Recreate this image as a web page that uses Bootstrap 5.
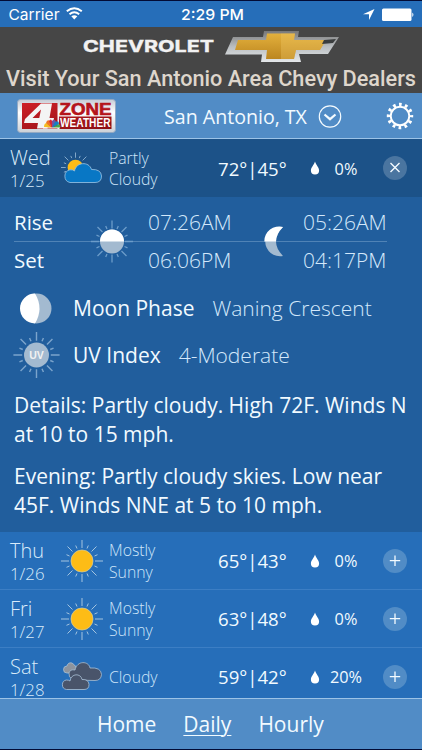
<!DOCTYPE html>
<html lang="en">
<head>
<meta charset="utf-8">
<meta name="viewport" content="width=device-width, initial-scale=1">
<title>4 Zone Weather</title>
<link href="https://cdn.jsdelivr.net/npm/bootstrap@5.3.0/dist/css/bootstrap.min.css" rel="stylesheet">
<style>
body{font-family:"Open Sans","Noto Sans",sans-serif;background:#266eb9;color:#f1faff;width:422px;height:750px;overflow:hidden;border-top:1px solid #020b35;border-bottom:1px solid #020b35;white-space:nowrap}
svg{display:block;flex:none}
.status{height:26px;background:#266eb9;font-family:Inter,"Liberation Sans",sans-serif;font-size:14.5px;padding:3px 8px 0}
.ad{height:66px;background:#464646}
.top{height:46px;background:#518cc6;border-bottom:1px solid #9cc3e7;padding-left:17px}
.city{font-size:19.6px;width:146px;margin-left:48px;padding-top:2px}
.day{height:58px;border-bottom:1px solid #3c7ec4;padding-left:10px;color:#f1faff}
.day.open{background:#1c5288;border:0}
.date{width:51px;font-weight:300;color:#d9ebfa;line-height:23px;padding-top:3px}
.date b{display:block;font-weight:300;font-size:20px;line-height:22px}
.date span{display:block;font-size:16.8px}
.sky{width:115px;padding-left:6px;font-weight:300;font-size:15.8px;line-height:21.5px;color:#cfe6fa;padding-top:2px}
.temp{width:92px;font-size:18.6px;padding-top:1px}
.rain{width:44px;font-size:16.3px;text-align:center;margin-left:4px;padding-top:2px}
.toggle{width:24px;height:24px;background:#518cc6;margin-left:15px}
.open .toggle{background:#4a75a0}
.detail{height:335px;background:#215e9d;font-size:21px;padding:0 14px}
.suns{height:86px;position:relative;padding-top:10px}
.suns>div{height:38px}
.suns .line{position:absolute;left:0;right:21px;top:44px;height:1px;background:#5083b6}
.suns svg{position:absolute;left:0;top:0}
.c1{width:134px;font-size:20.5px}.c2{width:155px}
.thin{font-weight:300;color:#d3e8fb}
.suns .thin{font-size:21px}
.fact{height:46px}
.fact svg{margin-left:-1px;margin-right:12px}
.fact span{padding-top:1px}
.fact .thin{margin-left:18px}
.moon{height:43px;margin-top:4px}
.uv{margin-top:2px}
.words{padding-top:13px}
.words p{line-height:28.5px;margin:0 0 14px}
.days{height:166px;overflow:hidden}
.foot{height:51px;background:#518cc6;border-top:1px solid #9cc3e7;font-size:21px;padding:1px 0 0 97px;gap:27px}
.foot a{color:#f1faff;text-decoration:none}
.foot a.on{text-decoration:underline;text-decoration-thickness:1px;text-underline-offset:3px}
</style>
<script src="https://cdn.jsdelivr.net/npm/bootstrap@5.3.0/dist/js/bootstrap.bundle.min.js"></script>
</head>
<body class="d-flex flex-column">
<svg width="0" height="0" class="position-absolute">
<defs>
<g id="rays" fill="none" stroke-linecap="butt"><path d="M0-13V-21M0 13V21M-13 0H-21M13 0H21M9.5-9.5L14.5-14.5M-9.5-9.5L-14.5-14.5M9.5 9.5L14.5 14.5M-9.5 9.5L-14.5 14.5M5-12.5L6.3-15.5M-5-12.5L-6.3-15.5M5 12.5L6.3 15.5M-5 12.5L-6.3 15.5M12.5-5L15.5-6.3M-12.5-5L-15.5-6.3M12.5 5L15.5 6.3M-12.5 5L-15.5 6.3"/></g>
<symbol id="sunny" viewBox="-21 -21 42 42"><use href="#rays" stroke="#a4c4df"/><circle r="11" fill="#fdbc16" stroke="#d9cf9b" stroke-width=".7"/></symbol>
<symbol id="drop" viewBox="0 0 10 14"><path d="M5 .5C6 4 9.100 6.500 9.100 9.500A4.100 4 0 0 1 .9 9.500C.9 6.500 4 4 5 .5Z" fill="#fff"/></symbol>
<symbol id="plus" viewBox="0 0 24 24"><path d="M12 6.500V17M6.800 11.700H17.200" stroke="#f4fbff" stroke-width="1.300"/></symbol>
<linearGradient id="gold" x2="0" y2="1"><stop stop-color="#e3b03c"/><stop offset="1" stop-color="#bc8620"/></linearGradient>
<linearGradient id="steel" x2="0" y2="1"><stop stop-color="#777"/><stop offset=".5" stop-color="#b9bdc0"/><stop offset="1" stop-color="#e4e7e9"/></linearGradient>
<linearGradient id="red" x2="1" y2="1"><stop stop-color="#ce2028"/><stop offset="1" stop-color="#8c0f13"/></linearGradient>
<linearGradient id="plate" x2="0" y2="1"><stop stop-color="#c5ccd6"/><stop offset=".4" stop-color="#fff"/><stop offset="1" stop-color="#cbd0d6"/></linearGradient>
</defs></svg>

<header class="status d-flex">
<svg width="406" height="20" viewBox="8 4 406 20"><g fill="#fff">
<text x="8.500" y="20" font-size="15" textLength="51" lengthAdjust="spacingAndGlyphs">Carrier</text>
<text x="181" y="20" font-size="15" font-weight="500" textLength="63" lengthAdjust="spacingAndGlyphs">2:29 PM</text>
<path d="M74.300 19.500L71.300 16.300Q74.300 14 77.300 16.300Z"/><path d="M69.500 14.300Q74.300 10.300 79.200 14.300M66.800 11.300Q74.300 5.300 81.800 11.300" fill="none" stroke="#fff" stroke-width="2"/>
<path d="M374.500 9L363 14.300H369V20Z"/><rect x="382" y="8.500" width="29.500" height="12.500" rx="1.500"/><path d="M412.300 12.500Q414.500 14.700 412.300 17Z"/></g></svg>
</header>

<section class="ad">
<svg width="422" height="66" viewBox="0 27 422 66">
<text x="83" y="51.700" font-size="16.500" font-weight="700" font-family="Inter,sans-serif" fill="#f2f2f2" stroke="#f2f2f2" stroke-width=".4" textLength="131" lengthAdjust="spacingAndGlyphs">CHEVROLET</text>
<path d="M233 37H263L264 31H299L298 37H339L328 54H299L301 62H261L262 54.500H225Z" fill="url(#steel)"/>
<path d="M238 40H266L267 33.500H295L294 40H326L320 50H296L294 59H266L267 50H235Z" fill="url(#gold)"/><path d="M281 33.500H295L294 40H326L320 50H296L294 59H281Z" fill="#f1c867" opacity=".35"/>
<path d="M324 40L336 39L333 43L322 44Z" fill="#3a3d3e"/>
<text x="6" y="85.500" font-size="22" font-weight="500" font-family="Roboto,sans-serif" fill="#ded6cc" textLength="410" lengthAdjust="spacingAndGlyphs">Visit Your San Antonio Area Chevy Dealers</text>
</svg>
</section>

<nav class="top d-flex align-items-center flex-shrink-0">
<svg width="99" height="34" viewBox="0 0 99 34"><rect x=".5" y=".5" width="98" height="33" rx="3" fill="url(#plate)" stroke="#93a9c3"/>
<path d="M5 4H40.500V30H5ZM42 17.500H94.500V30H42Z" fill="url(#red)"/>
<path d="M24 4.500H35L32.500 19H37L36 24H31.500L30.500 29.500H20L21 24H7L8 20ZM24 10.500L15.500 19H22.300Z" fill="#f4f4f4" fill-rule="evenodd"/>
<g font-family="Liberation Sans" font-weight="700"><text x="42.500" y="15.800" font-size="16" fill="#b5141b" stroke="#b5141b" stroke-width=".6" textLength="52" lengthAdjust="spacingAndGlyphs">ZONE</text><text x="43" y="28.300" font-size="12.500" fill="#fff" textLength="50.500" lengthAdjust="spacingAndGlyphs">WEATHER</text></g>
<path d="M35 29L27 28Q27 24 30 24Z" fill="#f5bd21"/><path d="M35 29L29 24Q30 20 33 22Z" fill="#ef7425"/><path d="M35 29L32 22Q34 19 35 22Z" fill="#d9273a"/><path d="M35 29L35 22Q38 19 39 23Z" fill="#7254a0"/><path d="M35 29L38 23Q42 21 42 25Z" fill="#167fc4"/><path d="M35 29L42 25Q45 28 42 29Z" fill="#4ba94a"/><path d="M26 29H43" stroke="#fff"/></svg>
<div class="city">San Antonio, TX</div>
<svg width="24" height="24" viewBox="0 0 24 24" class="ms-2" fill="none" stroke="#f4fbff"><circle cx="12" cy="12.500" r="10.700" stroke-width="1.200"/><path d="M6.500 10.500L12 15.200L17.500 10.500" stroke-width="2.200"/></svg>
<svg width="28" height="28" viewBox="-14 -14 28 28" class="ms-auto me-2" fill="none" stroke="#fff"><circle r="9.300" stroke-width="2"/><circle r="11.500" stroke-width="3.400" stroke-dasharray="2.700 3.321" stroke-dashoffset="1.350"/></svg>
</nav>

<section class="day open d-flex align-items-center flex-shrink-0">
<div class="date"><b>Wed</b><span>1/25</span></div>
<svg width="42" height="42" viewBox="-21 -21 42 42"><g transform="translate(-6.500 -.5) scale(.75)"><path d="M0-13V-20M-13 0H-20M9.500-9.500L14.500-14.500M-9.500-9.500L-14.500-14.500M5-12.500L6.300-15.500M-5-12.500L-6.300-15.500M-12.500-5L-15.500-6.300M-12.500 5L-15.500 6.300" stroke="#a4c4df" fill="none"/><circle r="10.500" fill="#fdbc16"/></g><path d="M-12 14.500A6.500 6.500 0 0 1-12 1.800Q-9 1.500-7.500 3C-6-6 7-7 9.500 1.500Q19 1 19.500 8Q19.500 14.500 13 14.500Z" fill="#0877c5" stroke="#8dbbe0" stroke-width=".9"/></svg>
<div class="sky">Partly<br>Cloudy</div><div class="temp">72°|45°</div><svg width="10" height="14"><use href="#drop"/></svg><div class="rain">0%</div>
<div class="toggle rounded-circle"><svg width="24" height="24" stroke="#f4fbff" stroke-width="1.400"><path d="M7.500 7L16.500 16M16.500 7L7.500 16"/></svg></div>
</section>

<section class="detail flex-shrink-0">
<div class="suns">
<div class="d-flex"><span class="c1">Rise</span><span class="c2 thin">07:26AM</span><span class="thin">05:26AM</span></div>
<div class="d-flex"><span class="c1">Set</span><span class="c2 thin">06:06PM</span><span class="thin">04:17PM</span></div>
<i class="line"></i>
<svg width="394" height="86" viewBox="14 197 394 86"><g transform="translate(112 241.500)"><use href="#rays" stroke="#6c9cc9" stroke-width="1.300"/><circle r="12" fill="#a3bad0"/><path d="M-12 0A12 12 0 0 1 12 0Z" fill="#fff"/></g>
<path d="M283 227A14.800 14.800 0 1 0 283 256Q269 241.500 283 227Z" fill="#a3bad0"/><path d="M283 227A14.800 14.800 0 0 0 264.300 241.500H276Q276 234 283 227Z" fill="#fff"/></svg>
</div>
<div class="fact moon d-flex align-items-center"><svg width="48" height="46" viewBox="-23 -23 48 46"><circle r="15" cx=".5" cy="-.5" fill="#a3bad0"/><path d="M-1-15.500A15 15 0 0 0-1 14.500Q8-.5-1-15.500Z" fill="#fff"/></svg><span>Moon Phase</span><span class="thin">Waning Crescent</span></div>
<div class="fact uv d-flex align-items-center"><svg width="48" height="46" viewBox="-23 -23 48 46"><use href="#rays" stroke="#7ba4cc" stroke-width="1.300" transform="translate(.5 0) scale(1.100)"/><circle r="12.500" cx=".5" fill="#a3bad0"/><text x=".5" y="3.500" text-anchor="middle" font-family="Liberation Sans" font-size="10.500" font-weight="700" fill="#f2f2f2">UV</text></svg><span>UV Index</span><span class="thin">4-Moderate</span></div>
<div class="words"><p>Details: Partly cloudy. High 72F. Winds N<br>at 10 to 15 mph.</p><p>Evening: Partly cloudy skies. Low near<br>45F. Winds NNE at 5 to 10 mph.</p></div>
</section>

<main class="days flex-shrink-0">
<section class="day d-flex align-items-center"><div class="date"><b>Thu</b><span>1/26</span></div><svg width="42" height="42"><use href="#sunny"/></svg><div class="sky">Mostly<br>Sunny</div><div class="temp">65°|43°</div><svg width="10" height="14"><use href="#drop"/></svg><div class="rain">0%</div><div class="toggle rounded-circle"><svg width="24" height="24"><use href="#plus"/></svg></div></section>
<section class="day d-flex align-items-center"><div class="date"><b>Fri</b><span>1/27</span></div><svg width="42" height="42"><use href="#sunny"/></svg><div class="sky">Mostly<br>Sunny</div><div class="temp">63°|48°</div><svg width="10" height="14"><use href="#drop"/></svg><div class="rain">0%</div><div class="toggle rounded-circle"><svg width="24" height="24"><use href="#plus"/></svg></div></section>
<section class="day d-flex align-items-center"><div class="date"><b>Sat</b><span>1/28</span></div><svg width="42" height="42" viewBox="0 0 42 42"><g stroke="#a9c0d6" stroke-width=".8"><path d="M6 17A3.500 3.500 0 0 1 6 10Q7 6 11 7Q14 9 15 11V17Z" fill="#8e949d"/><path d="M12 24Q7 21 8 17Q9 13 14 14C16 4 28 5 29 12Q40 11 40.500 18.500Q40 24.500 34 24.500Z" fill="#49546a"/><path d="M5.500 33.500A4.800 4.800 0 0 1 5.500 24Q8 24 9 25C10 17 20 17 21 23.500Q27.500 23 28 28.500Q28 33.500 23 33.500Z" fill="#49546a"/></g></svg><div class="sky">Cloudy</div><div class="temp">59°|42°</div><svg width="10" height="14"><use href="#drop"/></svg><div class="rain">20%</div><div class="toggle rounded-circle"><svg width="24" height="24"><use href="#plus"/></svg></div></section>
</main>
<footer class="foot d-flex align-items-center flex-shrink-0"><a href="#">Home</a><a href="#" class="on">Daily</a><a href="#">Hourly</a></footer>
</body>
</html>
